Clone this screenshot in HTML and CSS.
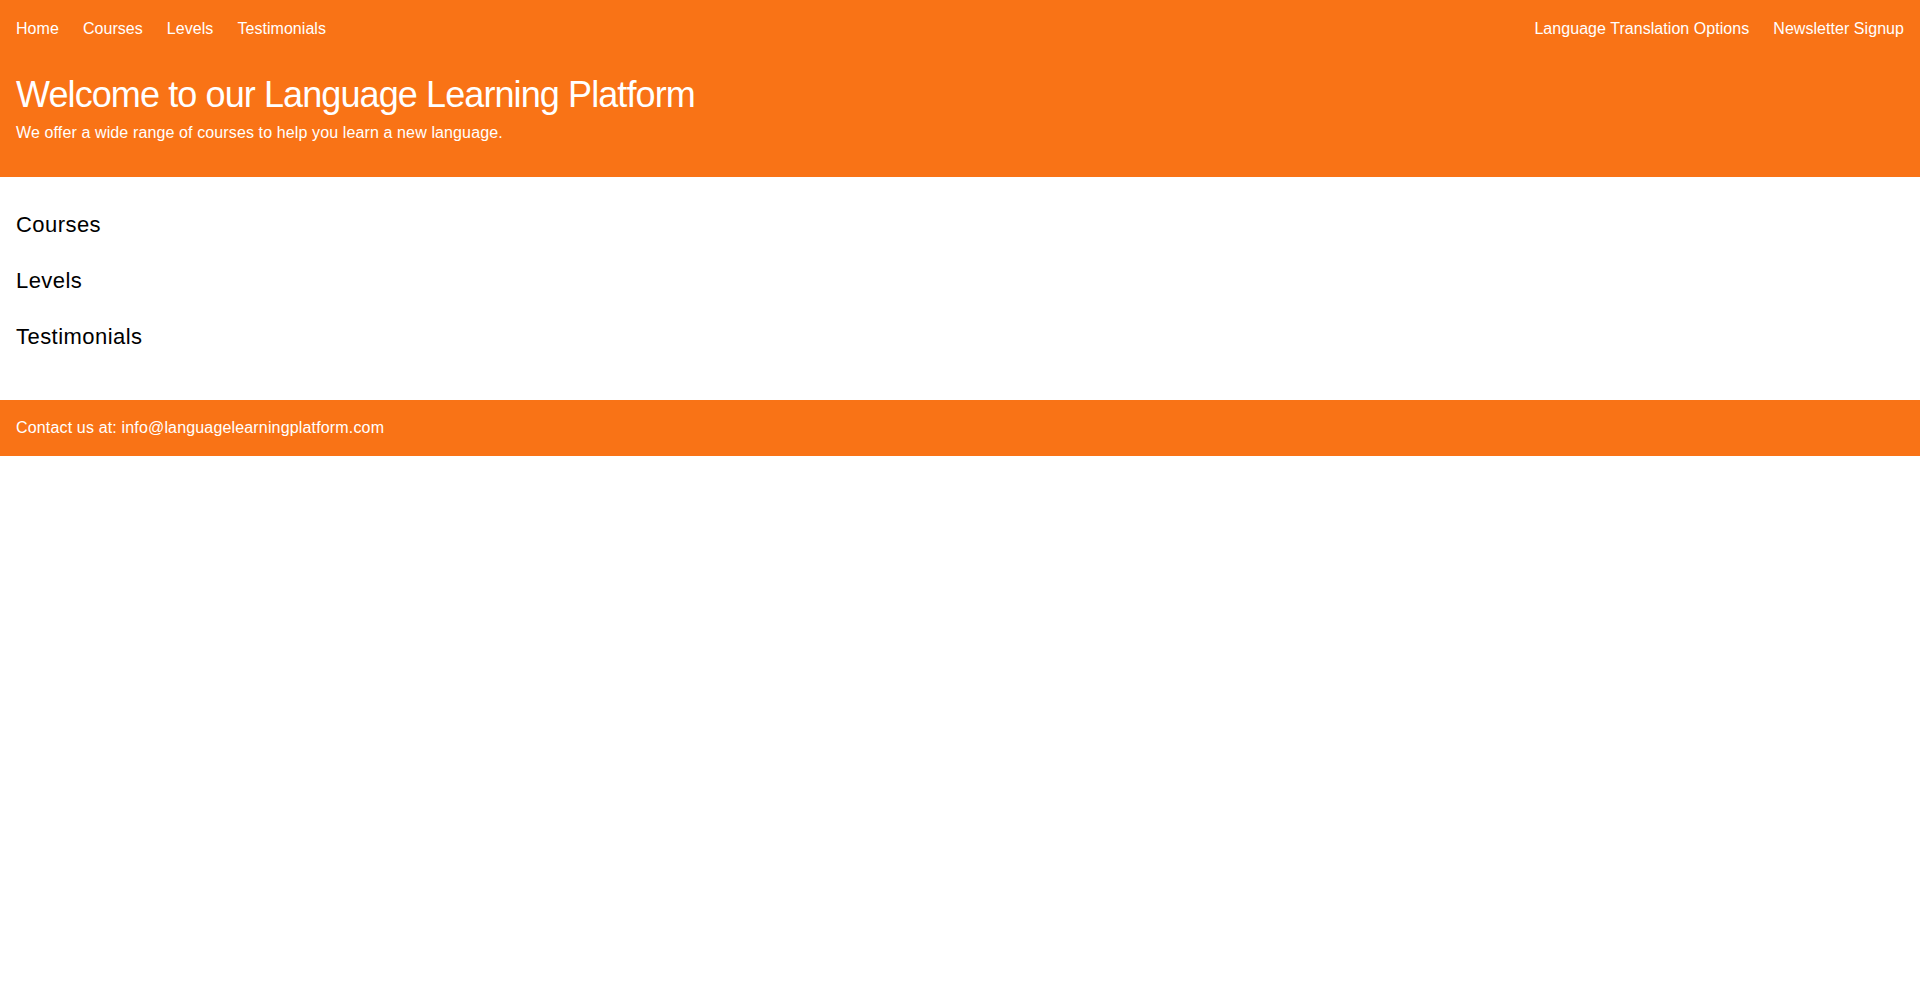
FILE: index.html
```html
<!DOCTYPE html>
<html lang="en">
<head>
<meta charset="utf-8">
<title>Language Learning Platform</title>
<link rel="stylesheet" href="styles.css">
</head>
<body>
<header class="site-header">
  <nav class="nav">
    <ul class="nav-list">
      <li><a href="#" class="nav-link">Home</a></li>
      <li><a href="#courses" class="nav-link">Courses</a></li>
      <li><a href="#levels" class="nav-link">Levels</a></li>
      <li><a href="#testimonials" class="nav-link">Testimonials</a></li>
    </ul>
    <ul class="nav-list">
      <li><a href="#" class="nav-link">Language Translation Options</a></li>
      <li><a href="#" class="nav-link">Newsletter Signup</a></li>
    </ul>
  </nav>
  <div class="hero">
    <h1 class="hero-title">Welcome to our Language Learning Platform</h1>
    <p class="hero-text">We offer a wide range of courses to help you learn a new language.</p>
  </div>
</header>
<main class="content">
  <section id="courses" class="section"><h2 class="section-title">Courses</h2></section>
  <section id="levels" class="section"><h2 class="section-title">Levels</h2></section>
  <section id="testimonials" class="section"><h2 class="section-title">Testimonials</h2></section>
</main>
<footer class="site-footer">
  <p class="footer-text">Contact us at: info@languagelearningplatform.com</p>
</footer>
</body>
</html>
```

FILE: styles.css
```css
* { box-sizing: border-box; }
html, body { margin: 0; padding: 0; }
body {
  font-family: "Liberation Sans", Arial, sans-serif;
  color: #000;
  background: #fff;
  font-size: 16px;
  line-height: 24px;
  letter-spacing: 0.12px;
}
.site-header {
  background: #f97316;
  color: #fff;
  padding: 17px 16px 32px;
}
.nav {
  display: flex;
  justify-content: space-between;
  align-items: center;
}
.nav-list {
  list-style: none;
  margin: 0;
  padding: 0;
  display: flex;
  gap: 24px;
}
.nav-link {
  color: #fff;
  text-decoration: none;
  font-size: 16px;
  line-height: 24px;
  letter-spacing: 0.05px;
}
.hero { margin-top: 34px; }
.hero-title {
  margin: 0;
  font-size: 36px;
  line-height: 40px;
  font-weight: 400;
  letter-spacing: -0.9px;
}
.hero-text {
  margin: 6px 0 0;
  font-size: 16px;
  line-height: 24px;
}
.content {
  padding: 34px 16px 49px;
  display: flex;
  flex-direction: column;
  gap: 28px;
}
.section-title {
  margin: 0;
  font-size: 22px;
  line-height: 28px;
  font-weight: 400;
  letter-spacing: 0.45px;
}
.site-footer {
  background: #f97316;
  color: #fff;
  padding: 16px;
}
.footer-text { margin: 0; letter-spacing: 0.16px; }
```
